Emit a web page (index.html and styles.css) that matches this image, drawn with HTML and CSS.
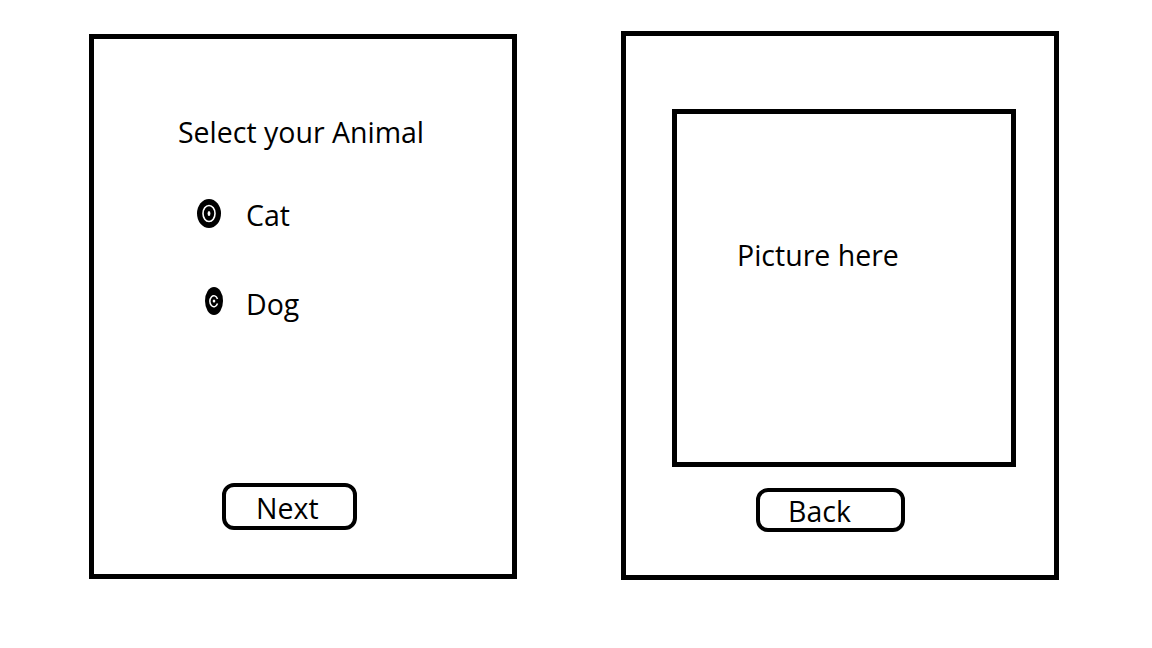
FILE: index.html
```html
<!DOCTYPE html>
<html lang="en">
<head>
<meta charset="utf-8">
<title>Animal picker wireframe</title>
<link rel="stylesheet" href="styles.css">
</head>
<body>
<div class="page">
  <section class="card card-select">
    <h1 class="title">Select your Animal</h1>
    <div class="option option-cat">
      <svg class="radio radio-cat" width="24" height="29" viewBox="0 0 24 29" aria-hidden="true">
        <ellipse cx="12" cy="14.5" rx="12" ry="14.5" fill="#000"/>
        <ellipse cx="12" cy="14.5" rx="6" ry="8" fill="none" stroke="#fff" stroke-width="1.6"/>
        <ellipse cx="12" cy="14.5" rx="1.4" ry="2.6" fill="#fff"/>
      </svg>
      <span class="label">Cat</span>
    </div>
    <div class="option option-dog">
      <svg class="radio radio-dog" width="18" height="28" viewBox="0 0 18 28" aria-hidden="true">
        <ellipse cx="9" cy="14" rx="9" ry="14" fill="#000"/>
        <path d="M12.5 12 A4 5.5 0 1 0 12.5 16.5" fill="none" stroke="#fff" stroke-width="1.5"/>
        <ellipse cx="9" cy="14" rx="1.3" ry="1.6" fill="#fff"/>
      </svg>
      <span class="label">Dog</span>
    </div>
    <button class="btn btn-next" type="button">Next</button>
  </section>

  <section class="card card-picture">
    <div class="picture">Picture here</div>
    <button class="btn btn-back" type="button">Back</button>
  </section>
</div>
</body>
</html>
```

FILE: styles.css
```css
html, body {
  margin: 0;
  padding: 0;
  background: #fff;
}

body {
  width: 1152px;
  height: 648px;
  overflow: hidden;
  font-family: "Open Sans", "Noto Sans", "Liberation Sans", sans-serif;
  color: #000;
  font-size: 28.5px;
  line-height: 25px;
}

.page {
  display: flex;
  align-items: flex-start;
  gap: 104px;
  padding-left: 89px;
}

.card {
  box-sizing: border-box;
  border: 5px solid #000;
  background: #fff;
  display: flex;
  flex-direction: column;
  align-items: flex-start;
}

.card-select {
  margin-top: 34px;
  width: 428px;
  height: 545px;
}

.title {
  margin: 81px 0 0 0;
  align-self: stretch;
  text-align: center;
  padding-right: 4px;
  font-size: 28.5px;
  line-height: 25px;
  font-weight: 400;
}

.option {
  display: flex;
  align-items: flex-start;
}

.radio {
  display: block;
  flex: none;
}

.label {
  display: block;
}

.option-cat {
  margin-top: 54px;
  margin-left: 103px;
}

.option-cat .label {
  margin-left: 25px;
  margin-top: 4px;
}

.option-dog {
  margin-top: 59px;
  margin-left: 111px;
}

.option-dog .label {
  margin-left: 23px;
  margin-top: 5px;
}

.btn {
  box-sizing: border-box;
  border: 4px solid #000;
  border-radius: 12px;
  background: #fff;
  font: inherit;
  color: #000;
  text-align: left;
  margin: 0;
  padding: 0;
}

.btn-next {
  align-self: flex-start;
  margin-top: 166px;
  margin-left: 128px;
  width: 135px;
  height: 47px;
  padding-left: 30px;
  padding-top: 4px;
}

.card-picture {
  margin-top: 31px;
  width: 438px;
  height: 549px;
}

.picture {
  box-sizing: border-box;
  margin-top: 73px;
  margin-left: 46px;
  width: 344px;
  height: 358px;
  border: 5px solid #000;
  padding: 129px 0 0 60px;
}

.btn-back {
  margin-top: 21px;
  margin-left: 130px;
  width: 149px;
  height: 44px;
  padding-left: 28px;
  padding-top: 3px;
}
```
